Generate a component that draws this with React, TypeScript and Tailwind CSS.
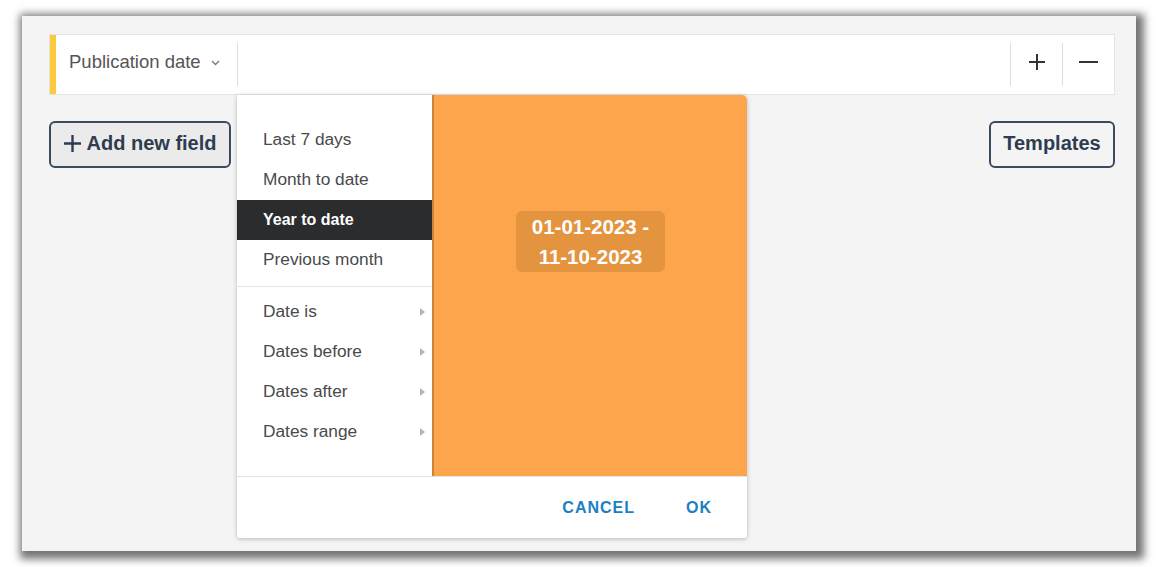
const font = { fontFamily: '"Liberation Sans", Arial, sans-serif' };

const presets = ["Last 7 days", "Month to date", "Year to date", "Previous month"];
const custom = ["Date is", "Dates before", "Dates after", "Dates range"];

const MenuItem = ({ label, active, arrow }: { label: string; active?: boolean; arrow?: boolean }) => (
  <div
    className={
      "flex h-[40px] items-center justify-between pl-[26px] pr-[7px] " +
      (active ? "bg-[#2b2c2e] text-[16px] font-bold text-white" : "text-[17.3px] text-[#4a4a4a]")
    }
  >
    <span>{label}</span>
    {arrow && (
      <svg width="5" height="8" viewBox="0 0 5 8">
        <path d="M0 0 L5 4 L0 8 Z" fill="#b5b5b5" />
      </svg>
    )}
  </div>
);

const App = () => {
  return (
    <div className="h-[567px] w-[1158px] overflow-hidden bg-white pl-[22px] pt-[16px]" style={font}>
      <div className="relative h-[535px] w-[1114px] bg-[#f4f4f4] pl-[27px] pr-[21px] pt-[18px] shadow-[3px_3px_8px_5px_rgba(0,0,0,0.55)]">
        {/* filter row */}
        <div className="flex h-[61px] items-center border border-[#e4e4e4] bg-white">
          <div className="h-full w-[6px] shrink-0 bg-[#fcc83c]" />
          <div className="mb-[6px] flex items-center pl-[13px] pr-[17px] text-[18.5px] text-[#555]">
            Publication date
            <svg className="ml-[10px] mt-[2px]" width="9" height="6" viewBox="0 0 9 6">
              <path d="M1 1 L4.5 4.5 L8 1" fill="none" stroke="#777" strokeWidth="1.3" />
            </svg>
          </div>
          <div className="h-[43px] w-px bg-[#dedede]" />
          <div className="flex-1" />
          <div className="h-[43px] w-px bg-[#dedede]" />
          <div className="mb-[5px] flex w-[51px] items-center justify-center">
            <svg width="18" height="18" viewBox="0 0 18 18">
              <path d="M9 1 V17 M1 9 H17" stroke="#333" strokeWidth="2" />
            </svg>
          </div>
          <div className="h-[43px] w-px bg-[#dedede]" />
          <div className="mb-[5px] flex w-[51px] items-center justify-center">
            <svg width="19" height="18" viewBox="0 0 19 18">
              <path d="M0 9 H19" stroke="#333" strokeWidth="2" />
            </svg>
          </div>
        </div>

        {/* buttons row */}
        <div className="mt-[26px] flex justify-between">
          <button className="flex h-[47px] w-[182px] items-center justify-center gap-[6px] rounded-[6px] border-2 border-[#3a4a5f] bg-[#ebebeb] pb-[3px] text-[20px] font-bold text-[#2e3c50]">
            <svg width="17" height="17" viewBox="0 0 17 17">
              <path d="M8.5 0 V17 M0 8.5 H17" stroke="#2e3c50" strokeWidth="2.4" />
            </svg>
            Add new field
          </button>
          <button className="h-[47px] w-[126px] rounded-[6px] border-2 border-[#3a4a5f] bg-[#f4f4f4] pb-[3px] text-[20px] font-bold text-[#2e3c50]">
            Templates
          </button>
        </div>

        {/* date dropdown */}
        <div className="absolute left-[215px] top-[79px] flex h-[443px] w-[510px] flex-col rounded-b-[3px] rounded-tr-[5px] bg-white shadow-[0_1px_4px_rgba(0,0,0,0.25)]">
          <div className="flex flex-1">
            <div className="w-[195px] pt-[25px]">
              {presets.map((p) => (
                <MenuItem key={p} label={p} active={p === "Year to date"} />
              ))}
              <div className="mb-[5px] mt-[6px] h-px bg-[#e6e6e6]" />
              {custom.map((c) => (
                <MenuItem key={c} label={c} arrow />
              ))}
            </div>
            <div className="flex flex-1 justify-center rounded-tr-[5px] border-l-2 border-[#cd8437] bg-[#fda54d] pt-[116px]">
              <div className="h-[61px] rounded-[6px] bg-[#e4933f] px-[16px] pt-[1px] text-center text-[20.5px] font-bold leading-[30px] text-white">
                01-01-2023 -
                <br />
                11-10-2023
              </div>
            </div>
          </div>
          <div className="flex h-[62px] items-center justify-end gap-[51px] border-t border-[#e2e2e2] pr-[35px] text-[16px] font-bold tracking-[1px] text-[#1b80c3]">
            <span>CANCEL</span>
            <span>OK</span>
          </div>
        </div>
      </div>
    </div>
  );
};

export default App;
